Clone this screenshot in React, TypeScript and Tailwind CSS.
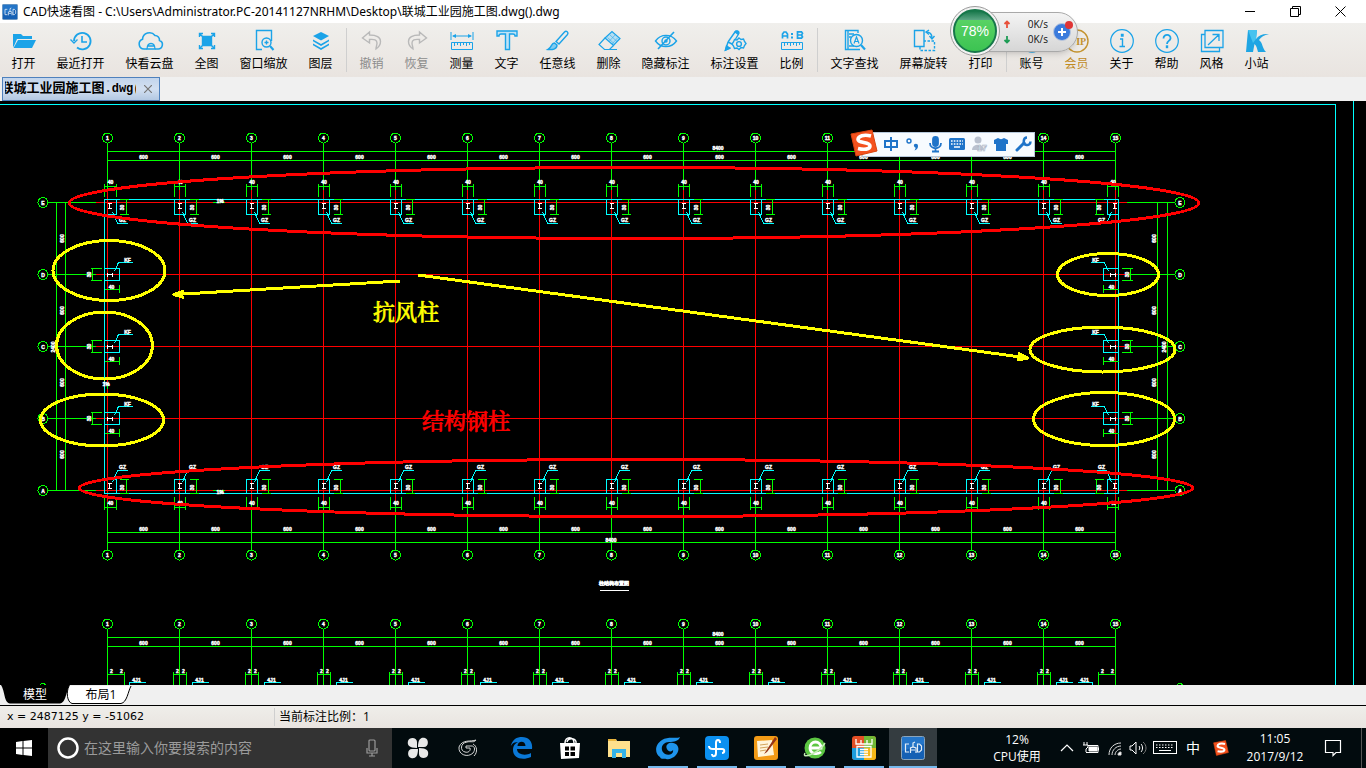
import { useState, type ReactNode } from "react";

interface Tool {
  label: string;
  icon: ReactNode;
  tone?: "off" | "gold";
}

const toolGroups: Tool[][] = [
  [
    {
      label: "打开",
      icon: <g fill="currentColor" stroke="none"><path d="M1 5h8l2 2h9v3H5L2 17l-1 1z" /><path d="M6 11h18l-4 8H1.500z" /></g>,
    },
    {
      label: "最近打开",
      icon: <g><path d="M5 12a8.300 8.300 0 1 1 3 6.500" strokeWidth="1.800" /><path d="M1.500 10.500 5 14l3.500-3.500" /><path d="M13 7v6h5" strokeWidth="1.600" /></g>,
    },
    {
      label: "快看云盘",
      icon: <g><path d="M9 20H6a5 5 0 0 1-1.500-9.700A7 7 0 0 1 17 6.500a4.500 4.500 0 0 1 4.500 5 4.400 4.400 0 0 1-2 8.500H17" strokeWidth="1.600" /><path d="M9 20.500c0-8 8-8 8 0M9.500 17h7M9 20h8" strokeWidth="1.300" /></g>,
    },
    {
      label: "全图",
      icon: <g><path d="M7.500 7.500h9v9h-9z" fill="currentColor" /><path d="M4.500 8V4.500H8M16 4.500h3.500V8M19.500 16v3.500H16M8 19.500H4.500V16M5 5l2.500 2.500M19 5l-2.500 2.500M19 19l-2.500-2.500M5 19l2.500-2.500" /></g>,
    },
    {
      label: "窗口缩放",
      icon: <g><path d="M10 20.500H4.500v-19h15V12" /><circle cx="14.500" cy="13.500" r="4.500" /><path d="M12.500 13.500h4M14.500 11.500v4" /><path d="m18 17 3.500 4" strokeWidth="2" /></g>,
    },
    {
      label: "图层",
      icon: <g fill="currentColor" stroke="none"><path d="m12 3 8 4-8 4.500L4 7z" /><path d="m4 10.500 8 4.500 8-4.500v1.800L12 17l-8-4.700z" /><path d="m4 14.500 8 4.500 8-4.500v1.800L12 21l-8-4.700z" /></g>,
    },
  ],
  [
    { label: "撤销", tone: "off", icon: <path d="M9.500 3 2.500 9l7 5v-3.500c5-.500 7.500.500 7.500 3.500 0 2-1 4-1 6 3-2 4.500-4.500 4.500-7.500 0-4.500-4-6.500-11-6.500z" /> },
    { label: "恢复", tone: "off", icon: <path d="m14.500 3 7 6-7 5v-3.500c-5-.500-7.500.500-7.500 3.500 0 2 1 4 1 6-3-2-4.500-4.500-4.500-7.500C3.500 8 7.500 6 14.500 6z" /> },
    {
      label: "测量",
      icon: <g strokeWidth="1"><path d="M1 3v8M23 3v8M3 7h18" /><path d="M2 7l4-2v4zM22 7l-4-2v4z" fill="currentColor" stroke="none" /><path d="M1.500 13.500h21v7h-21zM4.500 14v3M7.500 14v2M10.500 14v3M13.500 14v2M16.500 14v3M19.500 14v2" /></g>,
    },
    { label: "文字", icon: <path d="M2 2h20v5h-2c0-1.500-.500-2-2-2h-3.500v15.500h-4V5H6C4.500 5 4 5.500 4 7H2z" fill="#bfe3f6" /> },
    {
      label: "任意线",
      icon: <g><path d="M10 12.500 18.500 3c1.800-1.800 4.500.500 3 2.500L13 15z" /><path d="M8.500 14c-3.500 0-2.500 4.500-6.500 6.500 4 .500 9 0 9-4.500z" fill="#82cbef" /></g>,
    },
    {
      label: "删除",
      icon: <g strokeWidth="1.200"><path d="m8 9 7-6.500 8 7-6.500 7z" fill="#b5def2" /><path d="m8 9-6 6.500L7.500 20.500h5l4-4M7.500 20.500H20" /><path d="m10.500 8.500 7 6.500M13 6l7 6.500M12 12.500l6-6.500M15 15l5.500-6" strokeWidth="0.500" /></g>,
    },
    {
      label: "隐藏标注",
      icon: <g><path d="M1.500 12C7 4.500 17 4.500 22.500 12 17 19.500 7 19.500 1.500 12z" /><circle cx="12" cy="12" r="4" /><circle cx="12" cy="12" r="1" /><path d="M4 20 20 3" strokeWidth="1.600" /></g>,
    },
    {
      label: "标注设置",
      icon: <g><path d="m5 13 7-10c1-1.500 4 0 3.500 2L12 11M5 13l-2.500 8 5-2M5 13l4 2" /><path d="m12 3 3 2 1-1c0-2-2.500-3-4-1zM2.500 21l4-2-3-2z" fill="currentColor" /><path d="m16 9 2 1.500 2.500-.500 1 2.500 1.500 2-1.500 2-1 2.500-2.500-.500L16 20.500 14 19l-2.500.500-1-2.500L9 15l1.500-2 1-2.500 2.500.500z" /><circle cx="16" cy="15" r="2.400" /></g>,
    },
    {
      label: "比例",
      icon: <g><path d="M2.500 9.500V5l1.500-2h2l1.500 2v4.500M2.500 7h5M17.500 2.800v6.400h4l1-1.200-1-2 1-1.700-1-1.500zM18 6h4" strokeWidth="1.700" /><path d="M12 4v2M12 7.500v2" strokeWidth="2" /><path d="M1.500 13.500h21v7h-21zM4.500 14v3M7.500 14v2M10.500 14v3M13.500 14v2M16.500 14v3M19.500 14v2" strokeWidth="1" /></g>,
    },
  ],
  [
    {
      label: "文字查找",
      icon: <g><path d="M15 4V1.500H2.500v19H17M5 1.500v19M6 5h5M6 8h2M6 17h5" /><circle cx="13.500" cy="11.500" r="6" /><path d="m11 14.500 2.500-6.500 2.500 6.500M12 12.500h3" strokeWidth="1.200" /><path d="m18 16 4 4.500" strokeWidth="2.200" /></g>,
    },
    {
      label: "屏幕旋转",
      icon: <g><path d="M2.500 1.500h9.500v16H2.500z" /><path d="M8 18v3.500h14.500V12H12" strokeDasharray="2.500 1.500" /><path d="M14 3c4 0 6 2 6 6" /><path d="m17 1-3 2 3 2.500M17.500 7l2.500 3 2.500-3" /></g>,
    },
    { label: "打印", icon: <path d="M6 9V3h12v6M6 16H2.500V9h19v7H18M6 13h12v8H6z" /> },
  ],
  [
    { label: "账号", icon: <g><circle cx="12" cy="12" r="11" /><path d="M5 20c1-6 13-6 14 0" /><circle cx="12" cy="9" r="4" /></g> },
    {
      label: "会员",
      tone: "gold",
      icon: <g><circle cx="12" cy="12" r="11" /><text x="4" y="16" fontSize="10" fontWeight="bold" fill="currentColor" stroke="none" fontFamily="Liberation Serif, serif">VIP</text></g>,
    },
    { label: "关于", icon: <g><circle cx="12" cy="12" r="11.300" strokeWidth="1.200" /><path d="M10 10h2.500v7M9.500 17.500h5.500" /><path d="M11.500 5.500h1.500v1.500h-1.500z" fill="currentColor" /></g> },
    { label: "帮助", icon: <g><circle cx="12" cy="12" r="11.300" strokeWidth="1.200" /><path d="M8.500 9.500c0-5 7.500-4.500 7 0-.500 2.500-3.500 2.500-3.500 5.500" strokeWidth="1.800" /><path d="M11.500 17h1v1.500h-1z" fill="currentColor" /></g> },
    { label: "风格", icon: <path d="M5 1.500h18v17H5zM5 5.500H1.500v17h18v-4M8 16 18.500 6M12.500 5.500h6.500V12" strokeWidth="1.300" /> },
    {
      label: "小站",
      icon: <g stroke="none"><path d="M3 1h9l-1 9c3-4 7-5.500 13-5-5 1-8 3-10 6 4 3 3 8 7 12h-8c-1-3-1-6-3.500-8L8 23H1z" fill="#1fa5e3" /><path d="M3 1h9l-1 9-3 4z" fill="#46c3ef" /></g>,
    },
  ],
];

function ToolButton({ label, icon, tone }: Tool) {
  const width = label.length === 4 ? "w-[69px]" : label.length === 3 ? "w-[57px]" : "w-[45px]";
  const iconColor = tone === "off" ? "text-[#b9b9b9]" : tone === "gold" ? "text-[#c4932f]" : "text-[#1ba3e8]";
  const textColor = tone === "off" ? "text-[#8c8c8c]" : tone === "gold" ? "text-[#c08a1e]" : "text-black";
  return (
    <button className={`${width} shrink-0 flex flex-col items-center pt-[6px] gap-1`}>
      <svg viewBox="0 0 24 24" className={`w-6 h-6 ${iconColor}`} fill="none" stroke="currentColor" strokeWidth="1.400" overflow="visible">
        {icon}
      </svg>
      <span className={`text-xs leading-[14px] whitespace-nowrap ${textColor}`}>{label}</span>
    </button>
  );
}

function CadLogo({ className }: { className: string }) {
  return (
    <svg viewBox="0 0 24 24" className={className}>
      <rect x="0.500" y="0.500" width="23" height="23" rx="2" fill="#1560b4" stroke="#8aa4bb" />
      <path d="M1 1h22v7L1 15z" fill="#2f83d6" opacity="0.600" />
      <path d="M8 8H4.500v8H8M9.500 17v-5l2.500-1 3 1v5M10 14h4M12 11V7l2-1M16.500 8v8h2l2-2v-4l-2-2z" fill="none" stroke="#e4eef7" strokeWidth="1.200" />
    </svg>
  );
}

function SogouLogo({ className }: { className: string }) {
  return (
    <svg viewBox="0 0 28 28" className={className}>
      <path d="M1 5 22 1l5 21-21 5z" fill="#f4511e" stroke="#d9440f" />
      <path d="M21 7c-7-2-13 0-13 3.500 0 4 12 2 12 6.500 0 3.500-6 4-12 2.500" fill="none" stroke="#fff" strokeWidth="3.600" />
    </svg>
  );
}

const GREEN = "#00ff00";
const CYAN = "#00ffff";
const RED = "#ff0000";
const columns = Array.from({ length: 15 }, (_, i) => 107.5 + i * 72);
const rows = ["E", "D", "C", "B", "A"].map((name, i) => ({ name, y: 202.5 + i * 72 }));

function Note({ x, y, children, turned }: { x: number; y: number; children: ReactNode; turned?: boolean }) {
  return (
    <text x={x} y={y} fontSize="5" fontWeight="bold" textAnchor="middle" fill="#fff" stroke="#fff" strokeWidth="0.400" transform={turned ? `rotate(-90 ${x} ${y})` : undefined}>
      {children}
    </text>
  );
}

function AxisBubble({ x, y, children }: { x: number; y: number; children: ReactNode }) {
  return (
    <g>
      <circle cx={x} cy={y} r="5" fill="none" stroke={GREEN} />
      <Note x={x} y={y + 2}>{children}</Note>
    </g>
  );
}

// dimension chain over or under the column axes
function DimensionRow({ inner, outer, noteY, totalX, totalY }: { inner: number; outer: number; noteY: number; totalX: number; totalY: number }) {
  return (
    <g>
      <path d={`M107.500 ${inner}H1115.500M107.500 ${outer}H1115.500`} stroke={GREEN} />
      {columns.slice(0, -1).map((x) => <Note key={x} x={x + 36} y={noteY}>600</Note>)}
      <Note x={totalX} y={totalY}>8400</Note>
    </g>
  );
}

function SteelColumn({ index, x, bottom }: { index: number; x: number; bottom?: boolean }) {
  const last = index === 14;
  const left = index === 0 ? x - 3 : last ? x - 8 : x - 5;
  const right = index === 0 ? x + 9 : last ? x + 3 : x + 6;
  const top = bottom ? 479.5 : 199.5;
  const base = bottom ? 493.5 : 214.5;
  const mid = index === 0 ? x + 2 : last ? x - 1 : x;
  const side = last ? x - 19 : index === 0 ? x + 19 : x + 17;
  const dir = last ? -1 : 1;
  const leadX = mid + 3 * dir;
  return (
    <g fill="none">
      <rect x={left} y={top} width={right - left} height={base - top} stroke={CYAN} />
      <path d={`M${mid - 2} ${top + 3.5}h4M${mid} ${top + 3}v6M${mid - 2} ${top + 9}h4`} stroke="#fff" />
      <path d={`M${left} ${bottom ? 497 : 184}v13M${right} ${bottom ? 497 : 184}v13M${left} ${bottom ? 507.5 : 186.5}H${right}`} stroke={GREEN} />
      <path d={`M${side} ${top}V${base}M${side - 7 * dir} ${top}h${9 * dir}M${side - 7 * dir} ${base}h${9 * dir}`} stroke={GREEN} />
      <path d={bottom ? `M${leadX} 482l${5 * dir}-11.500h${10 * dir}` : `M${leadX} 212l${5 * dir} 11.500h${10 * dir}`} stroke={CYAN} />
      <Note x={side - 3 * dir + (last ? 1 : 0)} y={top + 8} turned>30</Note>
      <Note x={(left + right) / 2} y={bottom ? 505 : 184}>40</Note>
      <Note x={leadX + 10 * dir} y={bottom ? 469 : 222}>GZ</Note>
    </g>
  );
}

function WindColumn({ y, right }: { y: number; right?: boolean }) {
  const edge = right ? 1118.5 : 104.5;
  const dir = right ? -1 : 1;
  return (
    <g fill="none">
      <rect x={right ? 1103.5 : 104.5} y={y - 6} width="15" height="12" stroke={CYAN} />
      <path d={`M${edge + 3 * dir} ${y - 2}v4M${edge + 3 * dir} ${y}h${5 * dir}M${edge + 8 * dir} ${y - 2}v4`} stroke="#fff" />
      <path d={`M${edge + 10 * dir} ${y - 3}l${4 * dir}-9h${14 * dir}`} stroke={CYAN} />
      <path d={`M${edge - 12 * dir} ${y - 6}v12M${edge - 14 * dir} ${y - 6}h${11 * dir}M${edge - 14 * dir} ${y + 6}h${11 * dir}`} stroke={GREEN} />
      <path d={`M${edge} ${y + 15}h${15 * dir}M${edge + 15 * dir} ${y + 10}v8`} stroke={GREEN} />
      <Note x={edge + 23 * dir} y={y - 13}>KF</Note>
      <Note x={edge + 7 * dir} y={y + 14}>40</Note>
      <Note x={edge - (right ? -10 : 14)} y={y} turned>30</Note>
    </g>
  );
}

function Drawing() {
  return (
    <svg viewBox="0 101 1366 584" preserveAspectRatio="xMinYMin slice" className="w-full h-full block font-['Liberation_Sans',sans-serif]" shapeRendering="crispEdges">
      <rect y="101" width="1366" height="584" fill="#000" />
      <path d="M0 104.500H1335.500V685M1353.500 101V685" fill="none" stroke={CYAN} />

      {columns.map((x, i) => (
        <g key={x}>
          <path d={`M${x} 143V190M${x} 502V550M${x} 629V685`} stroke={GREEN} />
          <path d={`M${x} 190V502`} stroke={RED} />
          <AxisBubble x={x} y={138}>{i + 1}</AxisBubble>
          <AxisBubble x={x} y={555}>{i + 1}</AxisBubble>
          <AxisBubble x={x} y={624}>{i + 1}</AxisBubble>
        </g>
      ))}
      {rows.map(({ name, y }) => (
        <g key={name}>
          <path d={`M48 ${y}H96M1127 ${y}H1175`} stroke={GREEN} />
          <path d={`M96 ${y}H1127`} stroke={RED} />
          <AxisBubble x={43} y={y}>{name}</AxisBubble>
          <AxisBubble x={1180} y={y}>{name}</AxisBubble>
        </g>
      ))}
      <path d="M56.500 202V490M65.500 202V490M1157.500 202V490M1167.500 202V490" stroke={GREEN} />
      {rows.slice(0, -1).map(({ name, y }) => (
        <g key={name}>
          <Note x={64} y={y + 36} turned>600</Note>
          <Note x={1156} y={y + 36} turned>600</Note>
        </g>
      ))}
      <Note x={55} y={347} turned>2400</Note>
      <Note x={1166} y={347} turned>2400</Note>

      <DimensionRow inner={160.5} outer={151.5} noteY={159} totalX={718} totalY={150} />
      <DimensionRow inner={532.5} outer={542.5} noteY={531} totalX={611} totalY={542} />
      <DimensionRow inner={646.5} outer={637.5} noteY={645} totalX={718} totalY={636} />

      <rect x="104.500" y="199.500" width="1014" height="294" fill="none" stroke={CYAN} />
      {columns.map((x, i) => (
        <g key={x}>
          <SteelColumn index={i} x={x} />
          <SteelColumn index={i} x={x} bottom />
        </g>
      ))}
      {rows.slice(1, 4).map(({ name, y }) => (
        <g key={name}>
          <WindColumn y={y} />
          <WindColumn y={y} right />
        </g>
      ))}
      <path d="M213 202.500h12M213 490.500h12M107.500 383v6" stroke={GREEN} />
      <Note x={220} y={203}>1%</Note>
      <Note x={220} y={494}>1%</Note>
      <Note x={106} y={386}>1%</Note>

      <Note x={614} y={585}>柱结构布置图</Note>
      <path d="M600 590.500h29" stroke="#fff" />

      {/* upper edge of the next plan */}
      {columns.map((x, i) => {
        const left = i === 0 ? x : i === 14 ? x - 17 : x - 6;
        const right = i === 0 ? x + 17 : i === 14 ? x : x + 7;
        const lead = i === 0 ? x + 22 : i === 14 ? x - 38 : x + 13;
        return (
          <g key={x} fill="none">
            <path d={`M${left} 672V685M${right} 672V685M${left} 674.500H${right}`} stroke={GREEN} />
            <path d={i === 14 ? `M${lead} 682.500h15v3` : `M${lead} 685v-2.500h16`} stroke={CYAN} />
            <Note x={left + 4} y={673}>2</Note>
            <Note x={right - 3} y={673}>2</Note>
            <Note x={lead + 7} y={682}>4J1</Note>
          </g>
        );
      })}
      <path d="M40 685l2-1.500h2l2 1.500M1177 685l2-1.500h2l2 1.500" fill="none" stroke={GREEN} />

      <g fill="none" strokeWidth="3" strokeLinejoin="round">
        <ellipse cx="634" cy="203" rx="565" ry="35.500" stroke={RED} />
        <ellipse cx="636" cy="488" rx="557" ry="28.500" stroke={RED} />
        <g stroke="#ffff00">
          <ellipse cx="109" cy="270.500" rx="56" ry="30" />
          <ellipse cx="104.500" cy="345.500" rx="48" ry="33.500" />
          <ellipse cx="102" cy="420" rx="61.500" ry="26" />
          <ellipse cx="1108" cy="274.500" rx="50.500" ry="21" />
          <ellipse cx="1102.500" cy="349.500" rx="72.500" ry="22.500" />
          <ellipse cx="1104" cy="419" rx="70.500" ry="26.500" />
          <path d="M400 281 175 294.500M418 275l610 83" />
          <path d="m184 291-10 3.500 10 3M1018 353l10 5-11 2" />
        </g>
      </g>
      <g className="font-['Noto_Serif_CJK_SC','Noto_Sans_CJK_SC',serif]" fontSize="22" fontWeight="500" strokeWidth="0.600">
        <text x="373" y="320" fill="#ffff00" stroke="#ffff00">抗风柱</text>
        <text x="422" y="429" fill={RED} stroke={RED}>结构钢柱</text>
      </g>
    </svg>
  );
}

function SpeedBall() {
  return (
    <div className="absolute left-[950px] top-[6px] w-32 h-[50px]">
      <div className="absolute left-6 right-0 top-[6px] h-10 rounded-r-full border border-[#a9a9a9] bg-linear-to-b from-[#f4f4f4] to-[#d6d6d6] shadow-md flex items-center pl-7">
        <div className="flex flex-col gap-[3px] w-3">
          <svg viewBox="0 0 8 12" className="w-2 h-3" fill="none" stroke="#e8503a" strokeWidth="1.800"><path d="M4 9V3M1.500 5 4 2.500 6.500 5" /></svg>
          <svg viewBox="0 0 8 12" className="w-2 h-3" fill="none" stroke="#1e9c55" strokeWidth="1.800"><path d="M4 2v6M1.500 6 4 8.500 6.500 6" /></svg>
        </div>
        <div className="w-[33px] text-right text-[10px] leading-[15px] text-[#111]">
          <p>0K/s</p>
          <p>0K/s</p>
        </div>
        <button aria-label="加速" className="relative ml-[5px] w-[18px] h-[18px] rounded-full bg-[#3b7bdc] border border-[#b9c6dc]">
          <svg viewBox="0 0 16 16" className="w-4 h-4" stroke="#fff" strokeWidth="2"><path d="M8 4v8M4 8h8" /></svg>
          <i className="absolute -right-[3px] -top-[3px] w-2 h-2 rounded-full bg-[#e03535]" />
        </button>
      </div>
      <div className="absolute left-0 top-0 w-[50px] h-[50px] rounded-full bg-[#f2f2f2] border border-[#9c9c9c] p-[2px]">
        <div className="w-full h-full rounded-full border-2 border-[#16774a] overflow-hidden bg-[linear-gradient(#16774a_0,#5aa583_22%,#58d264_23%,#3cc352_100%)] flex items-center justify-center text-white text-sm leading-4 font-['Liberation_Sans',sans-serif]">
          78%
        </div>
      </div>
    </div>
  );
}

function ImeBar() {
  return (
    <div className="absolute left-[850px] top-[129px] h-7 flex items-center">
      <div className="absolute left-3 right-0 top-[3px] bottom-0 bg-[#f7fbff] border border-[#b7c9dc]" />
      <SogouLogo className="relative w-7 h-7" />
      <div className="relative flex items-center pt-[2px] pl-[2px] pr-px text-[#1f74c9]">
        <svg viewBox="0 0 20 20" className="w-[22px] h-5" fill="none" stroke="currentColor" strokeWidth="2"><path d="M4 7h12v6H4zM10 3v14" /></svg>
        <svg viewBox="0 0 20 20" className="w-[22px] h-5"><circle cx="6" cy="7" r="2" fill="none" stroke="currentColor" strokeWidth="1.400" /><path d="M11 10.500c2-1.500 4-.500 4 1.500 0 2-1 3.500-3.500 4.500.500-1 1.300-2 1-3-1 0-2-1.500-1.500-3z" fill="currentColor" /></svg>
        <svg viewBox="0 0 20 20" className="w-[22px] h-5" fill="none" stroke="currentColor" strokeWidth="1.800"><rect x="8" y="3" width="5" height="9" rx="2.500" fill="currentColor" /><path d="M5 9c0 7 11 7 11 0M10.500 14v3M7 17.500h7" /></svg>
        <svg viewBox="0 0 20 20" className="w-[22px] h-5"><rect x="2" y="4" width="16" height="12" rx="1.500" fill="currentColor" /><path d="M4 7h12M4 10h12" stroke="#fff" strokeWidth="1.600" strokeDasharray="1.600 1.200" /><path d="M7 13h6" stroke="#fff" strokeWidth="1.500" /></svg>
        <svg viewBox="0 0 20 20" className="w-[22px] h-5" fill="#b9c1cf"><circle cx="9" cy="6" r="3.500" /><path d="M3 16c0-7 12-7 12 0z" /><text x="8" y="17" fontSize="9" fontWeight="bold" fill="#fff" stroke="#a5b0c2" strokeWidth="0.600" fontFamily="Liberation Sans, sans-serif">17</text></svg>
        <svg viewBox="0 0 20 20" className="w-[22px] h-5" fill="currentColor"><path d="M7 4c2 1.500 4 1.500 6 0l4 2v4h-2v7H5v-7H3V6z" /></svg>
        <svg viewBox="0 0 20 20" className="w-[22px] h-5" fill="none" stroke="currentColor"><path d="m4 16 7-7" strokeWidth="3" strokeLinecap="round" /><path d="M14 3.500c-4 0-4.500 7-.500 7.500 2 .500 4-1 4-3.500" strokeWidth="2.500" /></svg>
      </div>
    </div>
  );
}

interface TaskApp {
  name: string;
  running?: boolean;
  active?: boolean;
  icon: ReactNode;
}

const quickApps: TaskApp[] = [
  { name: "看图助手", icon: <g fill="#e8e8e8"><path d="M11 12C3 12 1 9 2 5s9-4 9 1zM12 11c0-8 3-10 7-9s4 9-1 9zM13 12c8 0 10 3 9 7s-9 4-9-1zM12 13c0 8-3 10-7 9s-4-9 1-9z" /></g> },
  { name: "G 浏览器", icon: <g fill="none" stroke="#d5d5d5"><path d="M21 4c-5 2-14-1-17 7-1 8 9 11 14 6 3-4 1-7-1-7h-6v2h4c1 3-2 5-5 4-5-1-5-9 2-10 4-1 7 1 9-2z" /><path d="M18 8c4 2 5 8 1 12" /></g> },
];

const taskApps: TaskApp[] = [
  { name: "Edge", icon: <path d="M1.500 11.500C3 3 8 1 13 1c7 0 11 5 10 12H8c0 6 9 7 14 4v4c-9 4-18 1-18-7 0-5 3-7 5-8-5 0-7 3-7.500 5.500zM8.500 10h8c0-6-8-5.500-8 0z" fill="#0a78d7" /> },
  { name: "应用商店", icon: <g><path d="M2 7h20l-1 15-18 1z" fill="#fff" /><path d="M7 7c0-7 9-7 9 0M9 6c1-5 10-4 9 1" fill="none" stroke="#fff" strokeWidth="1.500" /><path d="M7 10.500h4v4H7zM12.500 10.500h4.500v4h-4.500zM7 16h4v4H7zM12.500 16h4.500v4h-4.500z" fill="#000" /></g> },
  { name: "文件资源管理器", icon: <g><path d="M1 3h8l1 2h13v16H1z" fill="#ffe08c" /><path d="M1 3h8v2H1z" fill="#eab63e" /><path d="M5 13h14v9h-4v-5H9v5H5z" fill="#35b2e8" /></g> },
  { name: "极速浏览器", running: true, icon: <path d="M24 1c-4 2-12-1-18 3-8 5-7 14-2 17 1 3 5 1 6 2 4 1 5-1 8-2 7-6 5-13-1-14-5-1-8 3-6 6 1 3 5 3 6 1 1 4-4 6-8 4-6-4-3-12 4-12 5 0 10-1 11-5z" fill="#1e94ec" /> },
  { name: "云助手", running: true, icon: <g><rect width="24" height="24" rx="4" fill="#0b90f0" /><path d="M15 7c0-4-4-4-4 0v10c0 4-4 4-4 1M4 10c0 3 2 3 4 3h9c3 0 3 4 0 4" fill="none" stroke="#fff" strokeWidth="2" /></g> },
  { name: "便签", running: true, icon: <g><rect width="24" height="24" rx="3" fill="#f39b16" /><path d="m3 5 15-1 2 15-16 2z" fill="#fff5db" /><path d="m6 9 8-1M6 12l8-1M6 15l6-1" stroke="#d3a45c" /><path d="m21 1-9 14-2 3 3-2L23 3z" fill="#973516" /></g> },
  { name: "360 浏览器", running: true, icon: <g><circle cx="12" cy="12" r="10.500" fill="#5cc642" /><path d="M7 12h11c0-8-11-8-11 0 0 6 7 7 11 4" fill="none" stroke="#fff" strokeWidth="2.800" /><path d="M2 17C-2 24 16 17 22 7" fill="none" stroke="#c5edb5" strokeWidth="1.500" /></g> },
  { name: "广联达", running: true, icon: <g><rect width="24" height="24" rx="3" fill="#e44f26" /><path d="M12 0h9a3 3 0 0 1 3 3v9H12z" fill="#72b936" /><path d="M0 12h12v12H3a3 3 0 0 1-3-3z" fill="#1c9ddd" /><path d="M12 12h12v9a3 3 0 0 1-3 3h-9z" fill="#f5b718" /><path d="M4 3v5h16V3M9 4v4M15 4v4M5 10.500h14V21H5zM8 13.500h8M8 16h8M8 18.500h8" fill="none" stroke="#fff" strokeWidth="1.300" /></g> },
  { name: "CAD快速看图", running: true, active: true, icon: null },
];

function TaskButton({ app }: { app: TaskApp }) {
  return (
    <button aria-label={app.name} className={`relative w-12 flex items-center justify-center ${app.active ? "bg-[#343c40]" : ""}`}>
      {app.icon ? <svg viewBox="0 0 24 24" className="w-6 h-6">{app.icon}</svg> : <CadLogo className="w-6 h-6" />}
      {app.running && <i className={`absolute bottom-0 h-[2px] bg-[#76b9ed] ${app.active ? "inset-x-0" : "inset-x-1"}`} />}
    </button>
  );
}

function Taskbar() {
  return (
    <footer className="h-10 shrink-0 flex bg-[#020b0e] text-white">
      <button aria-label="开始" className="w-12 shrink-0 bg-black flex items-center justify-center">
        <svg viewBox="0 0 16 16" className="w-4 h-4" fill="#fff"><path d="m0 2 6.500-1v6.500H0zM7.500 1 16 0v7.500H7.500zM0 8.500h6.500V15L0 14zM7.500 8.500H16V16l-8.500-1z" /></svg>
      </button>
      <label className="w-[344px] shrink-0 bg-[#333] flex items-center pl-2 pr-3">
        <svg viewBox="0 0 24 24" className="w-6 h-6"><circle cx="12" cy="12" r="9.500" fill="none" stroke="#fff" strokeWidth="2.500" /></svg>
        <input type="text" aria-label="搜索" placeholder="在这里输入你要搜索的内容" className="flex-1 min-w-0 pl-1 text-sm leading-5 bg-transparent outline-none placeholder:text-[#9b9b9b]" />
        <svg viewBox="0 0 16 20" className="w-4 h-5" fill="none" stroke="#9b9b9b" strokeWidth="1.200"><rect x="5" y="2" width="6" height="11" rx="1" /><path d="M3 10v5h10v-5M8 15v3M5 18h6" /></svg>
      </label>
      <div className="flex gap-px pl-[2px]">
        {quickApps.map((app) => <TaskButton key={app.name} app={app} />)}
      </div>
      <div className="flex gap-px pl-[6px]">
        {taskApps.map((app) => <TaskButton key={app.name} app={app} />)}
      </div>
      <div className="flex-1" />
      <div className="flex items-center text-xs">
        <div className="w-[76px] text-center leading-[17px]"><p>12%</p><p>CPU使用</p></div>
        <button aria-label="显示隐藏的图标" className="w-6 flex justify-center"><svg viewBox="0 0 14 10" className="w-[14px] h-[10px]" fill="none" stroke="#fff" strokeWidth="1.200"><path d="m1 8 6-6 6 6" /></svg></button>
        <svg viewBox="0 0 18 14" className="w-6 h-[14px]" fill="none" stroke="#fff"><path d="M6 4.500h10v7H4M16.500 6.500v3" /><path d="M7 6h8v4H7z" fill="#fff" /><path d="M2 1v3M5 1v3M1 4h5v2l-2 2v3" /></svg>
        <svg viewBox="0 0 24 16" className="w-6 h-4" fill="none" stroke="#ddd"><path d="M6 15C6 8 11 3 18 3M9 15c0-5 4-9 9-9M12 15c0-3 3-6 6-6" /><path d="M15 15c0-2 1-3 3-3v3z" fill="#fff" /></svg>
        <svg viewBox="0 0 22 16" className="w-[22px] h-4" fill="none" stroke="#fff"><path d="M3 6h2l4-4v12l-4-4H3zM12 6c1 1 1 3 0 4M14 4c2 2 2 6 0 8" /><path d="M16 2c4 3 4 9 0 12" stroke="#777" /></svg>
        <svg viewBox="0 0 24 14" className="w-8 h-[14px]" fill="none" stroke="#fff"><rect x="0.500" y="0.500" width="23" height="12" /><path d="M3 4h18M3 6.500h18" strokeDasharray="1.500 1.500" /><path d="M6 9.500h12" /></svg>
        <button className="w-6 text-sm leading-5">中</button>
        <SogouLogo className="w-4 h-4 mx-2" />
        <div className="w-[76px] text-center leading-[18px]"><p>11:05</p><p>2017/9/12</p></div>
        <button aria-label="通知" className="w-10 flex justify-center"><svg viewBox="0 0 18 18" className="w-[18px] h-[18px]" fill="none" stroke="#fff" strokeWidth="1.200"><path d="M1.500 1.500h15v12H12l-3 3v-3H1.500z" /></svg></button>
        <div className="w-2" />
        <div className="w-[5px] h-10 border-l border-[#555]" />
      </div>
    </footer>
  );
}

export default function App() {
  const [layout, setLayout] = useState<"model" | "sheet">("model");

  return (
    <div className="relative h-screen flex flex-col overflow-hidden bg-[#f0f0f0] text-black font-['Open_Sans','Noto_Sans_CJK_SC',sans-serif]">
      <header className="h-[23px] shrink-0 bg-white flex items-center pl-[2px] pr-[3px]">
        <CadLogo className="w-4 h-4" />
        <h1 className="pl-[5px] flex-1 text-xs whitespace-nowrap font-['Noto_Sans','Noto_Sans_CJK_SC',sans-serif]">CAD快速看图 - C:\Users\Administrator.PC-20141127NRHM\Desktop\联城工业园施工图.dwg().dwg</h1>
        <button aria-label="最小化" className="w-[45px] flex justify-center"><svg viewBox="0 0 11 11" className="w-[11px] h-[11px]" stroke="#000"><path d="M0 5.500h10" /></svg></button>
        <button aria-label="还原" className="w-[45px] flex justify-center"><svg viewBox="0 0 11 11" className="w-[11px] h-[11px]" fill="none" stroke="#000"><path d="M.500 2.500h8v8h-8zM2.500 2.500v-2h8v8h-2" /></svg></button>
        <button aria-label="关闭" className="w-[45px] flex justify-center"><svg viewBox="0 0 11 11" className="w-[11px] h-[11px]" stroke="#000"><path d="m.500.500 10 10M10.500.500l-10 10" /></svg></button>
      </header>

      <nav className="h-[54px] shrink-0 flex pl-px bg-linear-to-b from-[#f0efec] to-[#e9e4e0]">
        {toolGroups.map((group, i) => (
          <div key={group[0].label} className="flex">
            {i > 0 && <div className="w-[6px] flex justify-center py-[5px]"><div className="w-px bg-[#cfcfcf]" /></div>}
            {group.map((tool) => <ToolButton key={tool.label} {...tool} />)}
          </div>
        ))}
      </nav>

      <div className="h-6 shrink-0 flex pl-[2px]">
        <div className="w-[158px] flex items-center border border-[#4f81bd] bg-linear-to-b from-[#c3d5ec] via-[#d3e0f1] to-[#b3c8e2] pl-[2px]">
          <div className="w-[131px] overflow-hidden flex justify-center whitespace-nowrap text-[13px] leading-5 font-bold font-['Liberation_Mono','Noto_Sans_CJK_SC',monospace]">
            <span>联城工业园施工图<span className="text-xs">.dwg(</span></span>
          </div>
          <button aria-label="关闭图纸" className="flex-1 flex justify-center"><svg viewBox="0 0 8 8" className="w-2 h-2" stroke="#777" strokeWidth="1.200"><path d="m0 0 8 8M8 0 0 8" /></svg></button>
        </div>
      </div>

      <main className="flex-1 min-h-0 bg-black">
        <Drawing />
      </main>

      <div className="h-[21px] shrink-0 flex border-b border-black">
        <button onClick={() => setLayout("model")} aria-pressed={layout === "model"} className="relative w-[70px] text-xs leading-5 text-white">
          <svg viewBox="0 0 70 20" className="absolute inset-0 w-full h-5"><path d="M1 0c4 6 3 18 9 18.500h50C66 18 66 6 70 0z" fill="#000" /></svg>
          <span className="relative">模型</span>
        </button>
        <button onClick={() => setLayout("sheet")} aria-pressed={layout === "sheet"} className="relative w-[62px] text-xs leading-5">
          <svg viewBox="0 0 62 20" className="absolute inset-0 w-full h-5" overflow="visible"><path d="M-1 1c-3 6-2 16 3 17.500h49c6-1 7-12 10-17.500" fill="#fff" stroke="#000" /></svg>
          <span className="relative">布局1</span>
        </button>
      </div>

      <div className="h-[22px] shrink-0 flex items-center bg-linear-to-b from-[#efeeea] to-[#e9e4e0] text-xs">
        <p className="w-[274px] pl-[7px] text-[11px] font-['DejaVu_Sans',sans-serif]">x = 2487125 y = -51062</p>
        <p className="border-l border-[#cfcfcf] pl-1 leading-[18px]">当前标注比例：1</p>
      </div>

      <Taskbar />
      <ImeBar />
      <SpeedBall />
    </div>
  );
}
